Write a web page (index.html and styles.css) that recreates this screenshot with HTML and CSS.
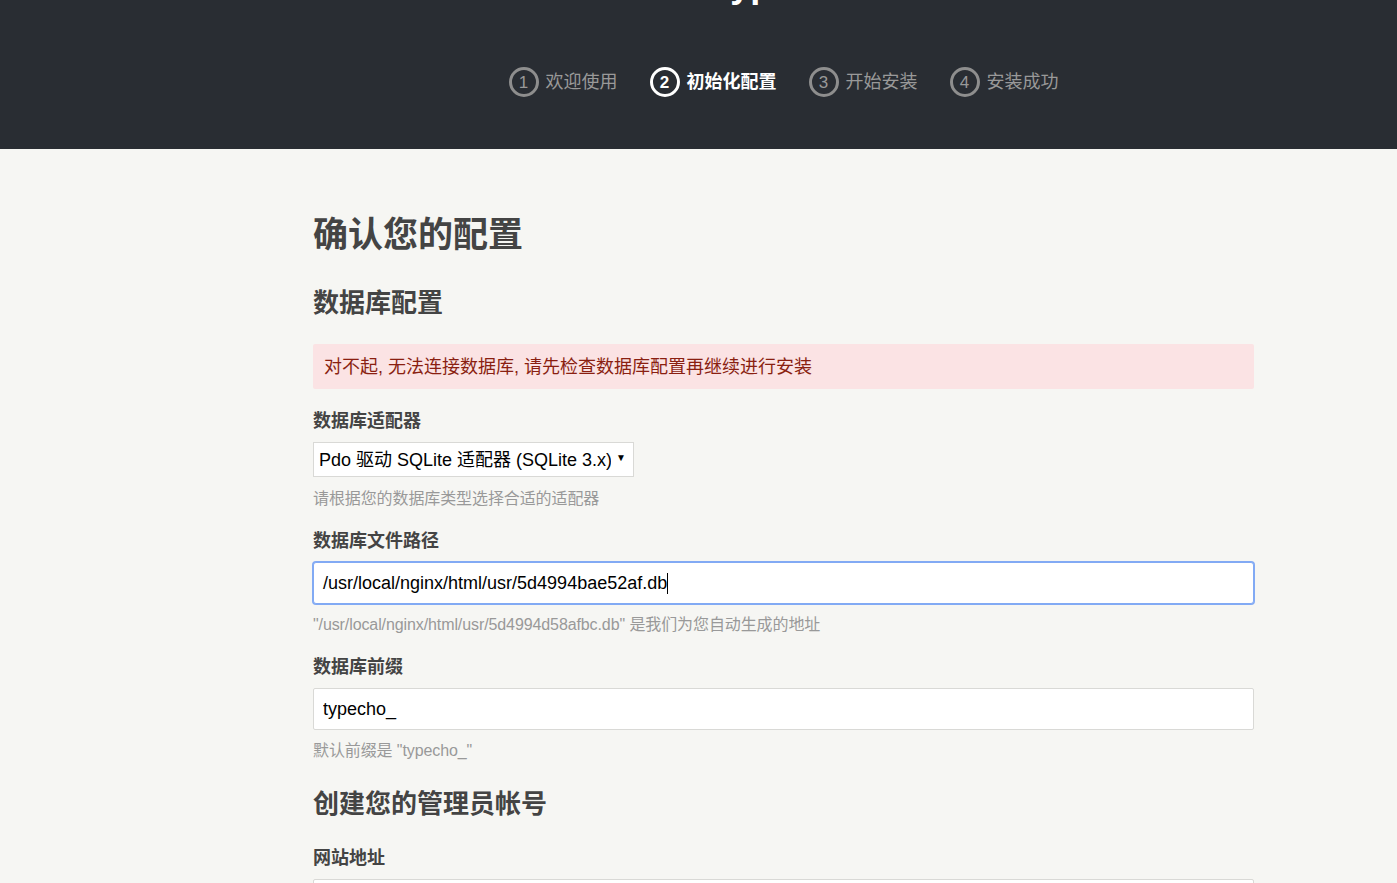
FILE: index.html
```html
<!DOCTYPE html>
<html lang="zh-CN">
<head>
<meta charset="utf-8">
<title>Typecho 安装程序</title>
<link rel="stylesheet" href="styles.css">
</head>
<body>
<header class="top">
  <div class="wrap">
    <h1 class="logo">Typecho</h1>
    <ol class="steps">
      <li class="step"><span class="num">1</span><span class="label">欢迎使用</span></li>
      <li class="step current"><span class="num">2</span><span class="label">初始化配置</span></li>
      <li class="step"><span class="num">3</span><span class="label">开始安装</span></li>
      <li class="step"><span class="num">4</span><span class="label">安装成功</span></li>
    </ol>
  </div>
</header>
<main class="wrap page">
  <h1 class="title">确认您的配置</h1>
  <h2 class="section">数据库配置</h2>
  <div class="error">对不起, 无法连接数据库, 请先检查数据库配置再继续进行安装</div>
  <ul class="fields">
    <li class="field first">
      <label class="field-label" for="adapter">数据库适配器</label>
      <span class="select-wrap">
        <select id="adapter" class="select"><option>Pdo 驱动 SQLite 适配器 (SQLite 3.x)</option></select>
        <span class="arrow">▼</span>
      </span>
      <p class="hint">请根据您的数据库类型选择合适的适配器</p>
    </li>
    <li class="field">
      <label class="field-label" for="dbfile">数据库文件路径</label>
      <div class="input focused"><span class="val">/usr/local/nginx/html/usr/5d4994bae52af.db</span><span class="caret"></span></div>
      <p class="hint">"/usr/local/nginx/html/usr/5d4994d58afbc.db" 是我们为您自动生成的地址</p>
    </li>
    <li class="field">
      <label class="field-label" for="prefix">数据库前缀</label>
      <input id="prefix" class="input" type="text" value="typecho_">
      <p class="hint">默认前缀是 "typecho_"</p>
    </li>
  </ul>
  <h2 class="section admin">创建您的管理员帐号</h2>
  <ul class="fields">
    <li class="field after-h2">
      <label class="field-label" for="siteurl">网站地址</label>
      <input id="siteurl" class="input" type="text" value="">
    </li>
  </ul>
</main>
</body>
</html>
```
FILE: styles.css
```css
html, body {
  margin: 0;
  padding: 0;
}
body {
  background: #F6F6F3;
  font-family: "Liberation Sans", "Noto Sans CJK SC", sans-serif;
  color: #444;
  overflow: hidden;
}
.wrap {
  width: 941px;
  margin-left: 313px;
}
.top {
  background: #292D33;
  height: 149px;
  overflow: hidden;
}
.logo {
  margin: -33px 0 0;
  font-size: 36px;
  line-height: 36px;
  font-weight: bold;
  color: #fff;
  text-align: center;
}
.steps {
  list-style: none;
  margin: 64px 0 0;
  padding: 0;
  display: flex;
  justify-content: center;
  gap: 32px;
}
.step {
  display: flex;
  align-items: center;
  gap: 7px;
  color: #999;
  font-size: 18px;
  line-height: 30px;
}
.num {
  box-sizing: border-box;
  width: 30px;
  height: 30px;
  border: 3px solid #8e8e8e;
  border-radius: 50%;
  display: flex;
  align-items: center;
  justify-content: center;
  font-size: 17px;
  line-height: 1;
}
.step.current {
  color: #fff;
  font-weight: bold;
}
.step.current .num {
  border-color: #fff;
}
.page {
  padding-bottom: 40px;
}
.title {
  margin: 65px 0 0;
  font-size: 35px;
  line-height: 42px;
  font-weight: bold;
  color: #444;
}
.section {
  margin: 32px 0 0;
  font-size: 26px;
  line-height: 31px;
  font-weight: bold;
  color: #444;
}
.section.admin {
  margin-top: 25px;
  padding-top: 1px;
}
.error {
  margin-top: 25px;
  background: #FBE3E4;
  color: #8A1F11;
  font-size: 18px;
  line-height: 27px;
  padding: 10px 11px 8px;
  border-radius: 2px;
}
.fields {
  list-style: none;
  margin: 0;
  padding: 0;
}
.field {
  margin-top: 16px;
}
.field.first {
  margin-top: 18px;
}
.field.after-h2 {
  margin-top: 24px;
}
.field-label {
  display: block;
  font-size: 18px;
  line-height: 27px;
  padding-top: 1px;
  font-weight: bold;
  color: #444;
  margin-bottom: 7px;
}
.select-wrap {
  position: relative;
  display: inline-block;
  vertical-align: top;
}
.select {
  -webkit-appearance: none;
  appearance: none;
  box-sizing: border-box;
  width: 321px;
  height: 35px;
  margin: 0;
  padding: 0 22px 0 5px;
  font-family: "Liberation Sans", "Noto Sans CJK SC", sans-serif;
  font-size: 18px;
  color: #000;
  background: #fff;
  border: 1px solid #D9D9D6;
  border-radius: 0;
  display: block;
}
.arrow {
  position: absolute;
  right: 8px;
  top: 11px;
  font-size: 10px;
  line-height: 10px;
  color: #000;
  pointer-events: none;
}
.hint {
  margin: 9px 0 0;
  padding-top: 1px;
  font-size: 16px;
  line-height: 24px;
  color: #999;
  letter-spacing: -0.1px;
}
.input {
  box-sizing: border-box;
  display: block;
  width: 100%;
  height: 42px;
  margin: 0;
  padding: 0 9px;
  font-family: "Liberation Sans", "Noto Sans CJK SC", sans-serif;
  font-size: 18px;
  line-height: 40px;
  color: #000;
  background: #fff;
  border: 1px solid #D9D9D6;
  border-radius: 2px;
  outline: none;
}
.input + .hint {
  margin-top: 8px;
}
.input.focused {
  display: flex;
  align-items: center;
  border-color: #82AAF4;
  box-shadow: 0 0 0 1px #82AAF4;
  border-radius: 3px;
}
.caret {
  width: 1px;
  height: 21px;
  background: #000;
}
```
